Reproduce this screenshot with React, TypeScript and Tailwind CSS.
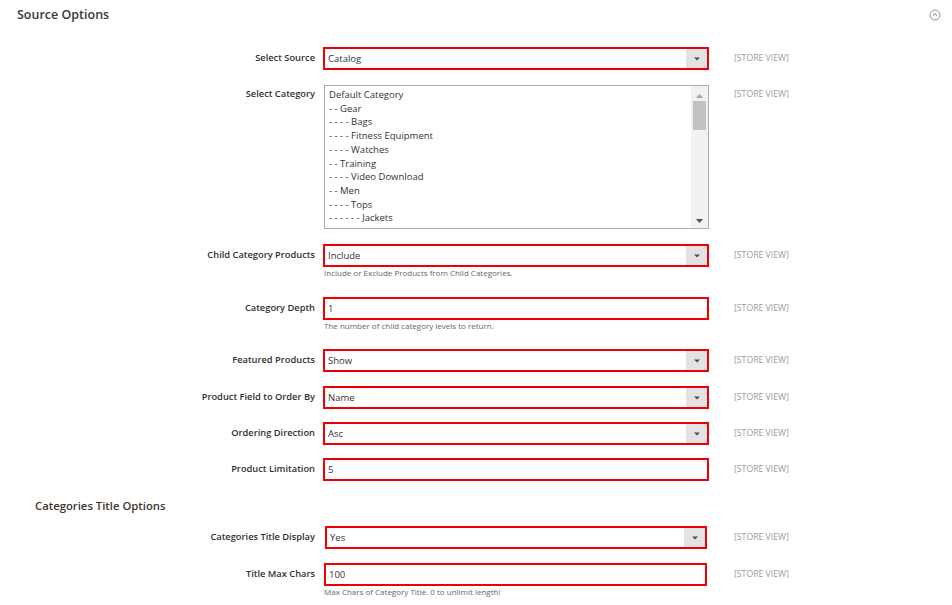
import React from "react";

type Field = {
  label: string;
  kind: "select" | "text";
  value: string;
  note?: string;
  mt: string;
  box?: string;
};

const categories = [
  "Default Category",
  "- - Gear",
  "- - - - Bags",
  "- - - - Fitness Equipment",
  "- - - - Watches",
  "- - Training",
  "- - - - Video Download",
  "- - Men",
  "- - - - Tops",
  "- - - - - - Jackets",
];

function Scope() {
  return (
    <div className="ml-[25px] text-[8.7px] leading-[22px] text-[#9a9a9a] uppercase whitespace-nowrap">
      [Store View]
    </div>
  );
}

function Label({ children }: { children: React.ReactNode }) {
  return (
    <div className="w-[315px] shrink-0 text-right text-[9.3px] font-semibold leading-[22px] text-[#303030] whitespace-nowrap">
      {children}
    </div>
  );
}

function Control({ field }: { field: Field }) {
  return (
    <div className="w-[386px] shrink-0">
      <div className={`flex h-[23px] items-stretch border-2 border-[#f00000] bg-white ${field.box ?? ""}`}>
        <div className="flex-1 pl-[3px] text-[9.5px] leading-[19px] text-[#333]">{field.value}</div>
        {field.kind === "select" && (
          <div className="flex w-[21px] items-center justify-center bg-[#e3e3e3]">
            <svg width="6" height="4" viewBox="0 0 6 4">
              <path d="M0 0.5h6L3 3.5z" fill="#4a4a4a" />
            </svg>
          </div>
        )}
      </div>
      {field.note && (
        <div className="pl-[1px] text-[8px] leading-[12px] text-[#666]">{field.note}</div>
      )}
    </div>
  );
}

function Row({ field }: { field: Field }) {
  return (
    <div className={`flex items-start ${field.mt}`}>
      <Label>{field.label}</Label>
      <div className="ml-[8px]">
        <Control field={field} />
      </div>
      <Scope />
    </div>
  );
}

const sourceFields: Field[] = [
  {
    label: "Child Category Products",
    kind: "select",
    value: "Include",
    note: "Include or Exclude Products from Child Categories.",
    mt: "mt-[15px]",
  },
  {
    label: "Category Depth",
    kind: "text",
    value: "1",
    note: "The number of child category levels to return.",
    mt: "mt-[18px]",
  },
  { label: "Featured Products", kind: "select", value: "Show", mt: "mt-[17px]" },
  { label: "Product Field to Order By", kind: "select", value: "Name", mt: "mt-[14px]" },
  { label: "Ordering Direction", kind: "select", value: "Asc", mt: "mt-[13px]" },
  { label: "Product Limitation", kind: "text", value: "5", mt: "mt-[13px]" },
];

const titleFields: Field[] = [
  {
    label: "Categories Title Display",
    kind: "select",
    value: "Yes",
    mt: "mt-[12px]",
    box: "ml-[2px] w-[382px]",
  },
  {
    label: "Title Max Chars",
    kind: "text",
    value: "100",
    note: "Max Chars of Category Title. 0 to unlimit length!",
    mt: "mt-[14px]",
    box: "ml-[1px] w-[383px]",
  },
];

export default function App() {
  return (
    <div className="h-[605px] w-[952px] overflow-hidden bg-white font-['Open_Sans',sans-serif]">
      <div className="flex items-center justify-between pl-[17px] pr-[11px] pt-[7px]">
        <h2 className="text-[12.5px] font-semibold leading-[16px] text-[#41362f]">Source Options</h2>
        <svg width="12" height="12" viewBox="0 0 12 12">
          <circle cx="6" cy="6" r="5" fill="none" stroke="#8a8a8a" strokeWidth="0.9" />
          <path d="M3.8 6.8L6 4.8l2.2 2" fill="none" stroke="#6a6a6a" strokeWidth="0.9" />
        </svg>
      </div>

      <div className="mt-[24px]">
        <Row field={{ label: "Select Source", kind: "select", value: "Catalog", mt: "" }} />

        <div className="mt-[15px] flex items-start">
          <div className="w-[315px] shrink-0 pt-[2px] text-right text-[9.3px] font-semibold leading-[14px] text-[#303030]">
            Select Category
          </div>
          <div className="ml-[9px] flex h-[144px] w-[385px] border border-[#adadad] bg-white">
            <div className="flex-1 overflow-hidden pl-[4px] pt-[2px] text-[9.5px] leading-[13.7px] text-[#333]">
              {categories.map((c) => (
                <div key={c} className="whitespace-pre">{c}</div>
              ))}
            </div>
            <div className="flex w-[17px] flex-col items-center bg-[#f1f1f1]">
              <svg className="mt-[8px]" width="7" height="4" viewBox="0 0 7 4">
                <path d="M0 4h7L3.5 0z" fill="#a3a3a3" />
              </svg>
              <div className="mt-[3px] h-[29px] w-[13px] bg-[#c1c1c1]" />
              <div className="flex-1" />
              <svg className="mb-[5px]" width="7" height="4" viewBox="0 0 7 4">
                <path d="M0 0h7L3.5 4z" fill="#505050" />
              </svg>
            </div>
          </div>
          <div className="ml-[25px] pt-[2px] text-[8.7px] leading-[14px] text-[#9a9a9a] uppercase whitespace-nowrap">
            [Store View]
          </div>
        </div>

        {sourceFields.map((f) => (
          <Row key={f.label} field={f} />
        ))}
      </div>

      <h3 className="mt-[17px] pl-[35px] text-[11.3px] font-semibold leading-[16px] text-[#41362f]">
        Categories Title Options
      </h3>

      <div>
        {titleFields.map((f) => (
          <Row key={f.label} field={f} />
        ))}
      </div>
    </div>
  );
}
